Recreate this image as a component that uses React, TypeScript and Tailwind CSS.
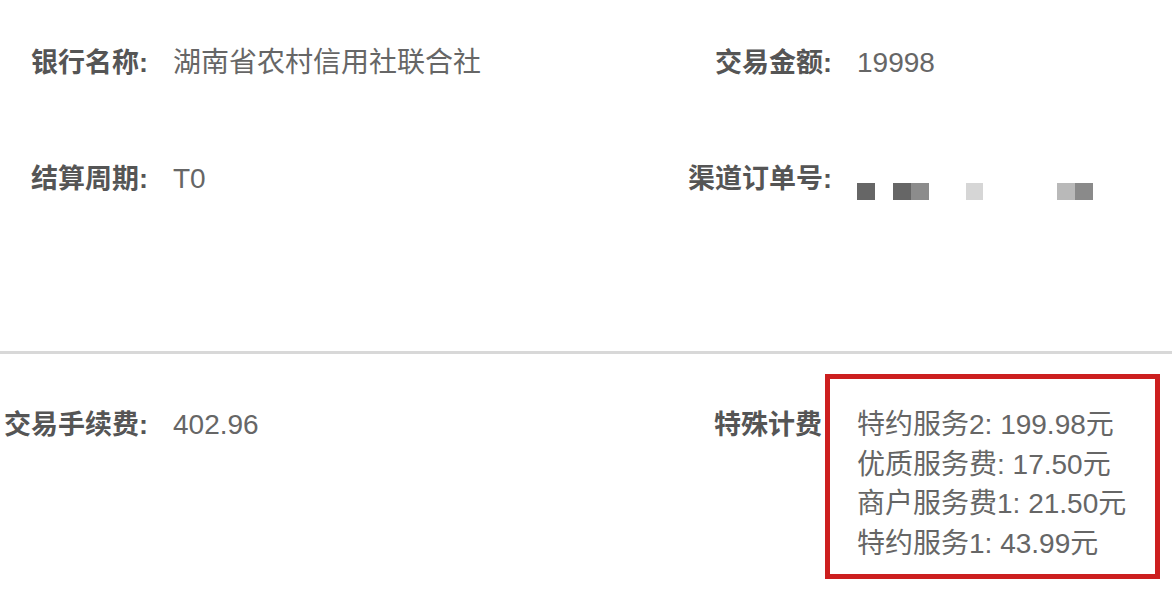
const font = { fontFamily: '"Liberation Sans", "Noto Sans CJK SC", sans-serif' };

function Label({ text, className = "" }: { text: string; className?: string }) {
  return <div className={`text-right text-[27px] leading-[40px] font-bold text-[#555] ${className}`}>{text}</div>;
}

function Value({ text }: { text: string }) {
  return <div className="text-[28px] leading-[40px] text-[#666]">{text}</div>;
}

export default function App() {
  const fees = ["特约服务2: 199.98元", "优质服务费: 17.50元", "商户服务费1: 21.50元", "特约服务1: 43.99元"];
  return (
    <div className="w-[1172px] h-[602px] bg-white overflow-hidden" style={font}>
      {/* 第一行 */}
      <div className="flex pt-[43px]">
        <div className="flex w-[640px] gap-[25px]">
          <Label text="银行名称:" className="w-[148px]" />
          <Value text="湖南省农村信用社联合社" />
        </div>
        <div className="flex gap-[25px]">
          <Label text="交易金额:" className="w-[192px]" />
          <Value text="19998" />
        </div>
      </div>

      {/* 第二行 */}
      <div className="flex mt-[76px]">
        <div className="flex w-[640px] gap-[25px]">
          <Label text="结算周期:" className="w-[148px]" />
          <Value text="T0" />
        </div>
        <div className="flex gap-[25px]">
          <Label text="渠道订单号:" className="w-[192px]" />
          {/* 打码的订单号 */}
          <div className="flex items-center h-[17px] mt-[24px]">
            <div className="w-[18px] h-[17px] bg-[#666]" />
            <div className="w-[18px] h-[17px] bg-[#666] ml-[18px]" />
            <div className="w-[18px] h-[17px] bg-[#8c8c8c]" />
            <div className="w-[17px] h-[17px] bg-[#d6d6d6] ml-[37px]" />
            <div className="w-[18px] h-[17px] bg-[#b9b9b9] ml-[74px]" />
            <div className="w-[18px] h-[17px] bg-[#8a8a8a]" />
          </div>
        </div>
      </div>

      <div className="mt-[151px] h-[3px] bg-[#d8d8d8]" />

      {/* 费用 */}
      <div className="flex mt-[20px]">
        <div className="flex w-[640px] gap-[25px] pt-[31px]">
          <Label text="交易手续费:" className="w-[148px]" />
          <Value text="402.96" />
        </div>
        <Label text="特殊计费" className="w-[185px] pr-[3px] pt-[31px]" />
        <div className="w-[335px] h-[205px] border-[5px] border-[#cc1f1f] pl-[27px] pt-[26px]">
          {fees.map((f) => (
            <div key={f} className="text-[28px] leading-[39.5px] text-[#666] whitespace-nowrap">
              {f}
            </div>
          ))}
        </div>
      </div>
    </div>
  );
}
